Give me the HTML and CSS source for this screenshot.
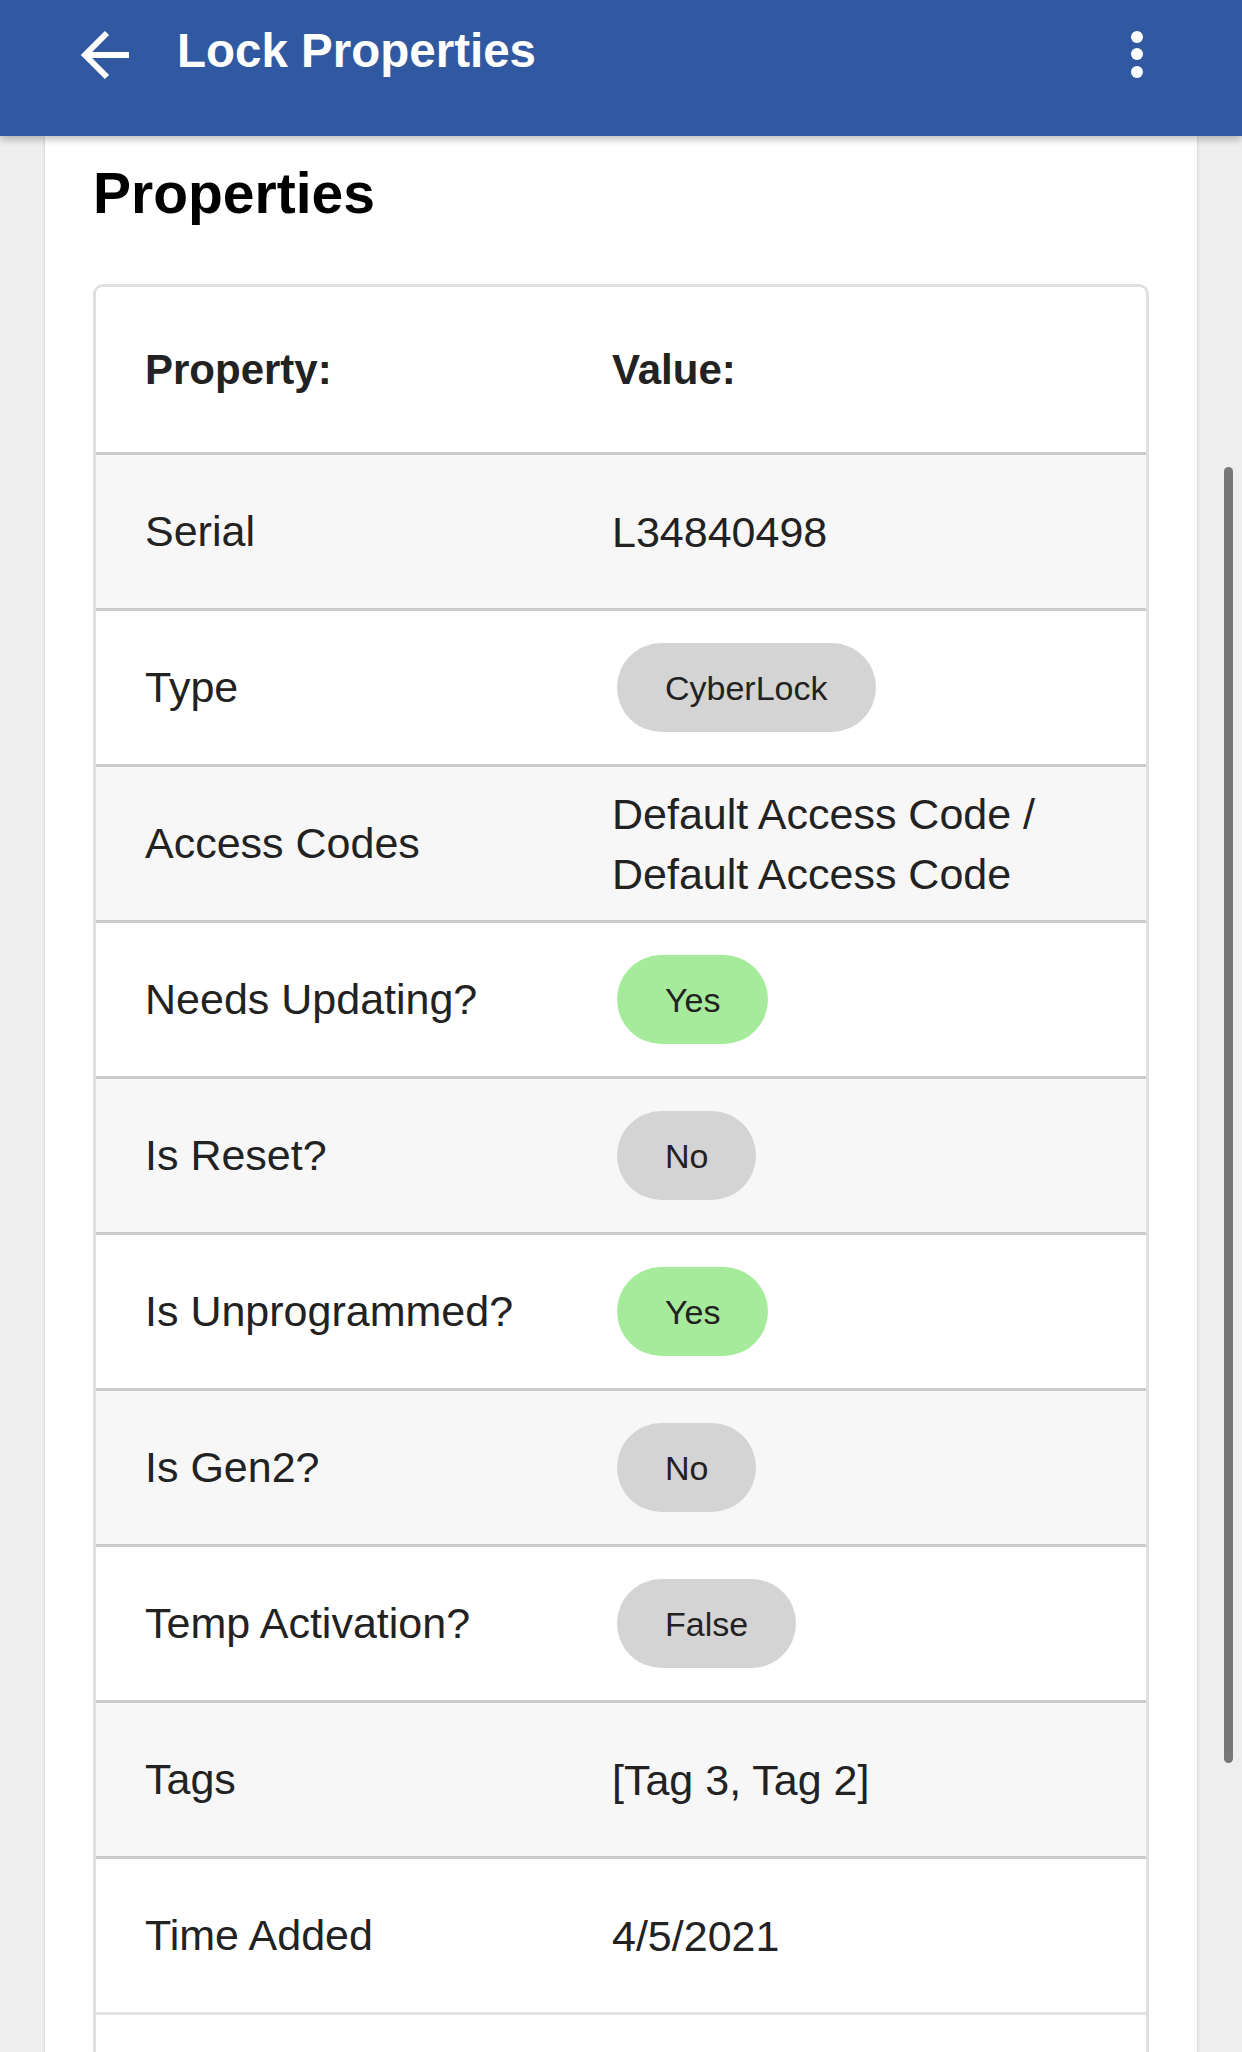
FILE: index.html
```html
<!DOCTYPE html>
<html lang="en">
<head>
<meta charset="utf-8">
<title>Lock Properties</title>
<link rel="stylesheet" href="styles.css">
</head>
<body>
<header class="appbar">
  <div class="toolbar">
    <svg class="back" width="52" height="52" viewBox="0 0 52 52" aria-hidden="true">
      <path d="M29 4 L7 26 L29 48 M8 26 H51" fill="none" stroke="#fff" stroke-width="6"/>
    </svg>
    <div class="title">Lock Properties</div>
    <div class="kebab"><span></span><span></span><span></span></div>
  </div>
</header>
<main class="content">
  <section class="card">
    <h1 class="card-title">Properties</h1>
    <div class="table">
      <div class="row head">
        <div class="cell key">Property:</div>
        <div class="cell val">Value:</div>
      </div>
      <div class="row alt">
        <div class="cell key">Serial</div>
        <div class="cell val">L34840498</div>
      </div>
      <div class="row">
        <div class="cell key">Type</div>
        <div class="cell val"><span class="chip">CyberLock</span></div>
      </div>
      <div class="row alt">
        <div class="cell key">Access Codes</div>
        <div class="cell val">Default Access Code / Default Access Code</div>
      </div>
      <div class="row">
        <div class="cell key">Needs Updating?</div>
        <div class="cell val"><span class="chip green">Yes</span></div>
      </div>
      <div class="row alt">
        <div class="cell key">Is Reset?</div>
        <div class="cell val"><span class="chip">No</span></div>
      </div>
      <div class="row">
        <div class="cell key">Is Unprogrammed?</div>
        <div class="cell val"><span class="chip green">Yes</span></div>
      </div>
      <div class="row alt">
        <div class="cell key">Is Gen2?</div>
        <div class="cell val"><span class="chip">No</span></div>
      </div>
      <div class="row">
        <div class="cell key">Temp Activation?</div>
        <div class="cell val"><span class="chip">False</span></div>
      </div>
      <div class="row alt">
        <div class="cell key">Tags</div>
        <div class="cell val">[Tag 3, Tag 2]</div>
      </div>
      <div class="row">
        <div class="cell key">Time Added</div>
        <div class="cell val">4/5/2021</div>
      </div>
      <div class="row light">
        <div class="cell key"></div>
        <div class="cell val"></div>
      </div>
    </div>
  </section>
</main>
<div class="scrollbar"></div>
</body>
</html>
```

FILE: styles.css
```css
html, body {
  margin: 0;
  padding: 0;
  height: 2052px;
  overflow: hidden;
}

body {
  background: #eeeeee;
  font-family: "Liberation Sans", Arial, Helvetica, sans-serif;
  color: #222222;
}

.appbar {
  position: relative;
  z-index: 2;
  height: 136px;
  background: #3159a1;
  box-shadow: 0 3px 8px rgba(0, 0, 0, 0.28);
}

.toolbar {
  height: 108px;
  display: flex;
  align-items: center;
  padding-left: 78px;
  padding-right: 99px;
}

.back {
  display: block;
  flex: none;
  margin-top: 2px;
}

.title {
  margin-left: 47px;
  margin-bottom: 8px;
  color: #ffffff;
  font-size: 47.5px;
  font-weight: 700;
  white-space: nowrap;
}

.kebab {
  margin-left: auto;
  display: flex;
  flex-direction: column;
  gap: 5.5px;
}

.kebab span {
  display: block;
  width: 12px;
  height: 12px;
  border-radius: 50%;
  background: #ffffff;
}

.content {
  padding: 0 45px;
}

.card {
  background: #ffffff;
  padding: 25px 48px 0;
  box-shadow: 0 1px 3px rgba(0, 0, 0, 0.18);
  min-height: 2000px;
}

.card-title {
  margin: 0 0 59px;
  font-size: 57px;
  line-height: 64px;
  font-weight: 700;
  color: #000000;
}

.table {
  border: 3px solid #e0e0e0;
  border-radius: 10px;
  overflow: hidden;
}

.row {
  display: grid;
  grid-template-columns: 516px 1fr;
  align-items: center;
  height: 153px;
  border-top: 3px solid #cbcbcb;
  background: #ffffff;
  font-size: 43px;
}

.row.head {
  height: 165px;
  border-top: none;
  font-size: 42px;
  font-weight: 700;
}

.row.alt {
  background: #f7f7f7;
}

.row.light {
  border-top-color: #e4e4e4;
}

.cell.key {
  padding-left: 49px;
}

.cell.val {
  padding-right: 49px;
  line-height: 60px;
}

.chip {
  display: inline-flex;
  align-items: center;
  height: 89px;
  padding: 0 48px;
  margin-left: 5px;
  border-radius: 45px;
  background: #d4d4d4;
  font-size: 34px;
  color: #222222;
  vertical-align: middle;
}

.chip.green {
  background: #a6eb9c;
}

.scrollbar {
  position: fixed;
  left: 1224px;
  top: 467px;
  width: 9px;
  height: 1296px;
  border-radius: 5px;
  background: #777777;
}
```
